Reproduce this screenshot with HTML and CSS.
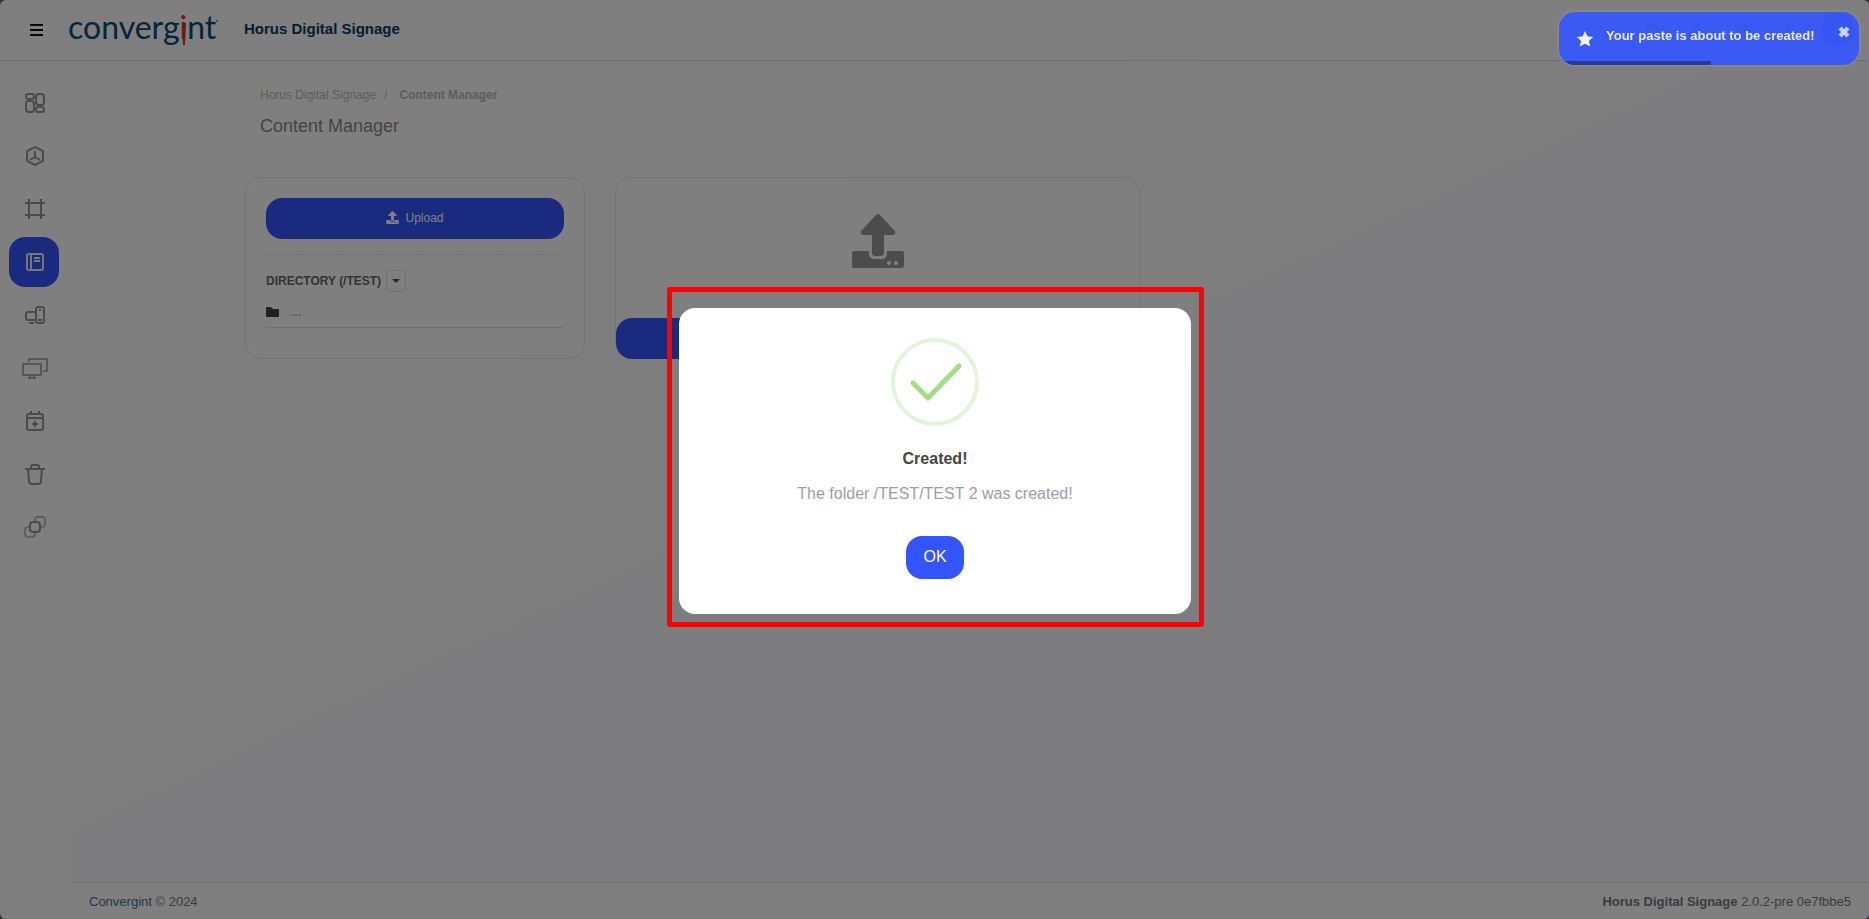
FILE: index.html
```html
<!DOCTYPE html>
<html lang="en">
<head>
    <meta charset="UTF-8">
    <meta name="viewport" content="width=device-width, initial-scale=1.0">
    <title>Content Manager - Horus Digital Signage</title>
    <link rel="stylesheet" href="styles.css">
</head>
<body>
<div class="app">
    <header class="header">
        <button class="menu-toggle" aria-label="Toggle menu">
            <svg width="13" height="12" viewBox="0 0 13 12"><path d="M0 1h13M0 6h13M0 11h13" stroke="currentColor" stroke-width="2"/></svg>
        </button>
        <a class="logo" href="#" aria-label="Convergint">
            <svg width="152" height="48" viewBox="0 0 152 48">
                <text class="logo-text" x="0" y="33">converg<tspan class="logo-i">i</tspan>nt</text>
                <path class="logo-spike" d="M114 17h4l-1 22h-2z"/>
                <circle class="logo-mark" cx="149" cy="15" r="1"/>
            </svg>
        </a>
        <span class="app-name">Horus Digital Signage</span>
        <div class="header-tools">
            <svg width="14" height="14" viewBox="0 0 14 14"><circle cx="7" cy="6" r="5"/><path d="M10 10l3 3"/></svg>
            <svg width="14" height="14" viewBox="0 0 14 14"><path d="M9 2a5 5 0 1 0 3 8a5 5 0 0 1-3-8z"/></svg>
            <svg width="16" height="12" viewBox="0 0 16 12"><path d="M0 2h4M6 2h4M12 2h4M0 7h4M6 7h4M12 7h4" stroke-width="3"/></svg>
            <svg width="4" height="14" viewBox="0 0 4 14"><path d="M2 1v3M2 6v3M2 11v3" stroke-width="3"/></svg>
            <span class="avatar">A</span>
        </div>
    </header>

    <div class="body">
        <nav class="sidebar">
            <a href="#" class="nav-item" aria-label="Dashboard">
                <svg width="20" height="20" viewBox="0 0 20 20"><rect x="1" y="1" width="8" height="5" rx="2"/><rect x="1" y="8" width="8" height="11" rx="3"/><rect x="11" y="1" width="8" height="11" rx="3"/><rect x="11" y="14" width="8" height="5" rx="2"/></svg>
            </a>
            <a href="#" class="nav-item" aria-label="Modules">
                <svg width="20" height="20" viewBox="0 0 20 20"><path d="M10 1l8 4v10l-8 4-8-4V5z"/><path d="M10 5v6l-5 3M10 11l5 3"/></svg>
            </a>
            <a href="#" class="nav-item" aria-label="Layouts">
                <svg width="20" height="20" viewBox="0 0 20 20"><path d="M4 0v20M16 0v20M0 4h20M0 16h20"/></svg>
            </a>
            <a href="#" class="nav-item active" aria-label="Content Manager">
                <svg width="20" height="20" viewBox="0 0 20 20"><rect x="2" y="2" width="16" height="16" rx="2"/><path d="M6 2v16M9 6h6M9 9h6"/></svg>
            </a>
            <a href="#" class="nav-item" aria-label="Devices">
                <svg width="20" height="20" viewBox="0 0 20 20"><path d="M11 15H3a2 2 0 0 1-2-2V9a2 2 0 0 1 2-2h8M4 18h5"/><rect x="11" y="2" width="8" height="16" rx="2"/><path d="M14 5h2M13 15h4"/></svg>
            </a>
            <a href="#" class="nav-item" aria-label="Screens">
                <svg class="thin" width="26" height="21" viewBox="0 0 26 21"><path d="M7 4V1h18v12h-4M1 6h18v11H1zM8 17v3M12 17v3M6 20h8"/></svg>
            </a>
            <a href="#" class="nav-item" aria-label="Schedule">
                <svg width="20" height="20" viewBox="0 0 20 20"><rect x="2" y="3" width="16" height="16" rx="2"/><path d="M2 7h16M6 0v3M14 0v3M10 10v6M7 13h6"/></svg>
            </a>
            <a href="#" class="nav-item" aria-label="Trash">
                <svg width="20" height="22" viewBox="0 0 20 22"><path d="M0 6h20M3 6l1 12a3 3 0 0 0 3 3h6a3 3 0 0 0 3-3l1-12M6 6V4a2 2 0 0 1 2-2h4a2 2 0 0 1 2 2v2"/></svg>
            </a>
            <a href="#" class="nav-item" aria-label="Groups">
                <svg width="22" height="22" viewBox="0 0 22 22"><rect x="6" y="6" width="10" height="10" rx="3"/><g opacity=".6"><path d="M11 6V4a3 3 0 0 1 3-3h4a3 3 0 0 1 3 3v4a3 3 0 0 1-3 3h-2M6 11H4a3 3 0 0 0-3 3v4a3 3 0 0 0 3 3h4a3 3 0 0 0 3-3v-2"/></g></svg>
            </a>
        </nav>

        <div class="main">
            <main class="content">
                <div class="page-title">
                    <div class="breadcrumb">
                        <a href="#">Horus Digital Signage</a><span class="separator">/</span><b>Content Manager</b>
                    </div>
                    <h1>Content Manager</h1>
                </div>

                <div class="row">
                    <section class="card directory">
                        <button class="button">
                            <svg width="13" height="13" viewBox="0 0 54 54"><use href="#icon-upload"/></svg>
                            Upload
                        </button>
                        <div class="dashed"></div>
                        <div class="directory-title">
                            <b>DIRECTORY (/TEST)</b>
                            <button class="caret" aria-label="Directory options"></button>
                        </div>
                        <a href="#" class="folder">
                            <svg width="13" height="10" viewBox="0 0 13 10"><path d="M1 0h4l2 2h5a1 1 0 0 1 1 1v6a1 1 0 0 1-1 1H1a1 1 0 0 1-1-1V1a1 1 0 0 1 1-1z"/></svg>
                            <span>...</span>
                        </a>
                    </section>

                    <section class="card dropzone">
                        <svg width="54" height="54" viewBox="0 0 54 54">
                            <g id="icon-upload" fill="currentColor">
                                <path d="M25 1q2-2 4 0l15 16q1 4-2 4h-9v18q0 3-3 3h-6q-3 0-3-3V21h-9q-3 0-2-4z"/>
                                <path fill-rule="evenodd" d="M3 37h15v2q0 6 6 6h6q6 0 6-6v-2h15q2 0 2 2v13q0 2-2 2H3q-2 0-2-2V39q0-2 2-2zM38 47a2 2 0 1 0 0 4a2 2 0 1 0 0-4zM45 47a2 2 0 1 0 0 4a2 2 0 1 0 0-4z"/>
                            </g>
                        </svg>
                        <button class="button" aria-label="Upload files"></button>
                    </section>
                </div>
            </main>

            <footer class="footer">
                <span><a href="#">Convergint</a> © 2024</span>
                <span><b>Horus Digital Signage</b> 2.0.2-pre 0e7fbbe5</span>
            </footer>
        </div>
    </div>
</div>

<div class="overlay">
    <div class="highlight">
        <div class="modal" role="dialog" aria-labelledby="modal-title">
            <svg class="modal-icon" width="88" height="88" viewBox="0 0 88 88">
                <circle cx="44" cy="44" r="42"/>
                <path d="M22 45l15 15 31-32"/>
            </svg>
            <h2 id="modal-title">Created!</h2>
            <p>The folder /TEST/TEST 2 was created!</p>
            <button class="ok">OK</button>
        </div>
    </div>
</div>

<div class="toast" role="status">
    <svg width="18" height="18" viewBox="0 0 18 18"><path d="M9 1l2.500 5.200 5.700.7-4.200 3.900 1.100 5.700L9 13.700l-5.100 2.800L5 10.800.8 6.900l5.700-.7z"/></svg>
    <span>Your paste is about to be created!</span>
    <button class="toast-close" aria-label="Close">
        <svg width="12" height="12" viewBox="0 0 12 12"><path d="M2 2l8 8M10 2l-8 8"/></svg>
    </button>
    <div class="toast-progress"></div>
</div>
</body>
</html>
```

FILE: styles.css
```css
* {
    box-sizing: border-box;
}

html {
    background: #6a6a7c;
}

body {
    margin: 0;
    font-family: Arial, "Liberation Sans", sans-serif;
    font-size: 13px;
    color: #77777d;
}

a {
    color: inherit;
    text-decoration: none;
}

button {
    border: none;
    padding: 0;
    background: none;
    font-family: inherit;
    cursor: pointer;
}

.app {
    display: flex;
    flex-direction: column;
    min-height: 100vh;
    border-radius: 6px;
    background-color: white;
    overflow: hidden;
}

/* HEADER */
.header {
    display: flex;
    align-items: center;
    height: 61px;
    padding: 0 14px 0 30px;
    border-bottom: 1px solid #e4e4e4;
}

.menu-toggle {
    display: flex;
    color: #111;
}

.logo {
    display: flex;
    margin: 0 24px 0 25px;
}

.logo-text {
    font-family: Lato, sans-serif;
    font-size: 32px;
    fill: #0d4a73;
}

.logo-i,
.logo-spike {
    fill: #d8382f;
}

.logo-mark {
    fill: #6c8ca5;
}

.app-name {
    font-size: 15px;
    line-height: 20px;
    padding-bottom: 2px;
    font-weight: bold;
    color: #063a61;
}

.header-tools {
    display: flex;
    align-items: center;
    gap: 32px;
    margin-left: auto;
    color: #444;
}

.header-tools svg {
    fill: none;
    stroke: currentColor;
    stroke-width: 2;
}

.avatar {
    width: 34px;
    height: 34px;
    border-radius: 50%;
    background-color: #3454ff;
    color: white;
    line-height: 34px;
    text-align: center;
}

/* SIDEBAR */
.body {
    display: flex;
    flex: 1;
}

.sidebar {
    display: flex;
    flex-direction: column;
    gap: 3px;
    width: 69px;
    padding: 17px 9px;
}

.nav-item {
    display: flex;
    align-items: center;
    justify-content: center;
    width: 50px;
    height: 50px;
    padding-left: 2px;
    border-radius: 16px;
    color: #979797;
}

.nav-item svg {
    fill: none;
    stroke: currentColor;
    stroke-width: 2;
}

.nav-item svg.thin {
    stroke-width: 1.5;
}

.nav-item.active {
    background-color: #3454ff;
    color: #eee;
}

/* CONTENT */
.main {
    display: flex;
    flex-direction: column;
    flex: 1;
    background: linear-gradient(155deg, #fff 20%, #fafaff 60%);
}

.content {
    flex: 1;
    width: 100%;
    max-width: 1480px;
    margin: 0 auto;
    padding: 24px 16px;
}

.page-title {
    padding: 2px 15px;
}

.breadcrumb {
    font-size: 12px;
    line-height: 16px;
    color: #bbb;
}

.separator {
    margin: 0 12px 0 8px;
}

h1 {
    margin: 11px 0 37px;
    font-size: 18px;
    font-weight: normal;
    line-height: 24px;
    color: #888;
}

.row {
    display: grid;
    grid-template-columns: 340fr 525fr 523fr;
    gap: 30px;
}

.card {
    display: flex;
    flex-direction: column;
    min-height: 182px;
    border: 1px solid #e6e6e9;
    border-radius: 16px;
    background-color: white;
}

.directory {
    padding: 20px;
}

.button {
    display: flex;
    align-items: center;
    justify-content: center;
    gap: 6px;
    width: 100%;
    height: 41px;
    padding-bottom: 2px;
    border-radius: 16px;
    background-color: #3454ff;
    color: white;
    font-size: 12px;
}

.dashed {
    margin-top: 15px;
    border-top: 1px dashed #e0e0e0;
}

.directory-title {
    display: flex;
    align-items: center;
    gap: 5px;
    margin-top: 15px;
    font-size: 12px;
    color: #666;
}

.caret {
    display: flex;
    align-items: center;
    justify-content: center;
    width: 20px;
    height: 22px;
    border: 1px solid #e4e4e4;
    border-radius: 2px;
}

.caret::before {
    content: "";
    border: 4px solid transparent;
    border-top-color: #555;
    border-bottom: none;
}

.folder {
    display: flex;
    align-items: center;
    gap: 12px;
    height: 36px;
    padding-top: 4px;
    border-bottom: 1px solid #e4e4e4;
    font-size: 12px;
}

.folder svg {
    fill: #3c444e;
}

.dropzone {
    align-items: center;
    justify-content: space-between;
    padding-top: 36px;
    border-bottom: none;
    color: #999;
}

/* FOOTER */
.footer {
    display: flex;
    align-items: center;
    justify-content: space-between;
    height: 37px;
    padding: 0 18px 0 20px;
    border-top: 1px solid #e6e6e9;
    background-color: white;
}

.footer a {
    color: #41719c;
}

/* MODAL */
.overlay {
    position: fixed;
    inset: 0;
    display: flex;
    align-items: center;
    justify-content: center;
    padding: 0 0 5px 2px;
    background-color: rgba(0, 0, 0, 0.5);
}

.highlight {
    padding: 16px 8px 8px 7px;
    border: 5px solid #f00;
    border-radius: 3px;
}

.modal {
    display: flex;
    flex-direction: column;
    align-items: center;
    width: 512px;
    padding: 30px 20px 35px;
    border-radius: 16px;
    background-color: white;
}

.modal-icon {
    fill: none;
    stroke: #e3f4db;
    stroke-width: 4;
}

.modal-icon path {
    stroke: #a5dc86;
    stroke-width: 5;
    stroke-linecap: round;
    stroke-linejoin: round;
}

.modal h2 {
    margin: 23px 0 14px;
    font-size: 16px;
    line-height: 20px;
    color: #444;
}

.modal p {
    margin: 0 0 31px;
    font-size: 16px;
    line-height: 22px;
    color: #9d9da6;
}

.ok {
    width: 58px;
    height: 43px;
    padding-bottom: 2px;
    border-radius: 16px;
    background-color: #3454ff;
    color: white;
    font-size: 16px;
}

/* TOAST */
.toast {
    position: fixed;
    top: 12px;
    right: 10px;
    display: flex;
    gap: 12px;
    width: 300px;
    height: 53px;
    padding: 16px 9px 0 17px;
    border-radius: 16px;
    background-color: rgba(56, 88, 250, 0.95);
    box-shadow: 0 0 3px #999;
    color: #e8ebff;
    font-weight: bold;
    overflow: hidden;
}

.toast > svg {
    margin-top: 2px;
    fill: #f0f2ff;
}

.toast-close {
    display: flex;
    height: 12px;
    margin-left: auto;
    margin-top: -2px;
}

.toast-close svg {
    stroke: #ccd4ff;
    stroke-width: 4;
}

.toast-progress {
    position: absolute;
    left: 0;
    bottom: 0;
    width: 152px;
    height: 4px;
    background-color: #263a9c;
}
```
